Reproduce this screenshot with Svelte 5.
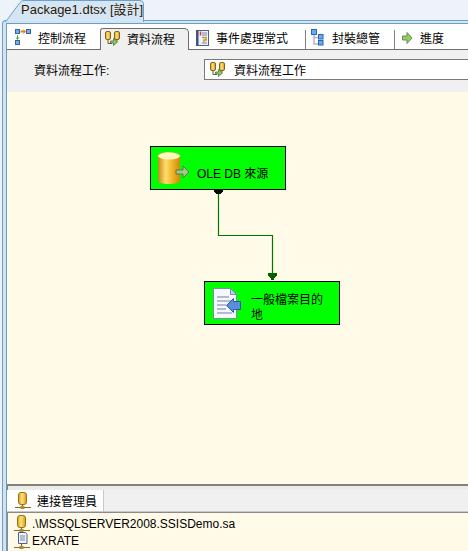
<script lang="ts">
	const tabs = [
		{ label: '控制流程', icon: 'control', active: false },
		{ label: '資料流程', icon: 'data', active: true },
		{ label: '事件處理常式', icon: 'event', active: false },
		{ label: '封裝總管', icon: 'tree', active: false },
		{ label: '進度', icon: 'progress', active: false }
	];
</script>

{#snippet dataIcon()}
	<svg width="17" height="17" viewBox="0 0 17 17">
		<defs>
			<linearGradient id="gold" x1="0" x2="1" y1="0" y2="0">
				<stop offset="0" stop-color="#d8a020" />
				<stop offset="0.450" stop-color="#ffe27a" />
				<stop offset="1" stop-color="#d49a18" />
			</linearGradient>
		</defs>
		<rect x="1.500" y="1.500" width="5" height="8" rx="1.500" fill="url(#gold)" stroke="#85660f" />
		<rect x="10.500" y="1.500" width="5" height="8" rx="1.500" fill="url(#gold)" stroke="#85660f" />
		<path d="M4 9.500v4h4M13 9.500v2" fill="none" stroke="#6a5a20" />
		<path d="M6.500 11h3V8.500l4 3.500-4 3.500V13h-3z" fill="#8cc56a" stroke="#4c7a3a" stroke-width="0.800" />
	</svg>
{/snippet}

{#snippet connIcon()}
	<svg width="20" height="18" viewBox="0 0 20 18">
		<rect x="4.500" y="0.500" width="8" height="12" rx="2.500" fill="url(#gold)" stroke="#9a7414" />
		<path d="M8.500 12v3M1 15.500h16" stroke="#8a6a20" stroke-width="1.200" fill="none" />
		<rect x="6.500" y="14" width="4" height="3" fill="#b08a30" />
	</svg>
{/snippet}

<div class="page">
	<div class="doc-strip">
		<svg class="doc-shape" width="148" height="22" viewBox="0 0 148 22">
			<path d="M5.500 22L20 2.500Q21.500 0.500 24 0.500H140Q143.500 0.500 143.500 4V22" fill="#d4e6f6" stroke="#6ea0c4" />
		</svg>
		<div class="doc-tab">Package1.dtsx [設計]</div>
	</div>
	<div class="frame">
		<div class="inner">
			<div class="tabs">
				{#each tabs as tab, i}
					{#if i > 2}<span class="sep"></span>{/if}
					<div class="tab {tab.icon}" class:active={tab.active}>
						{#if tab.icon === 'control'}
							<svg width="17" height="17" viewBox="0 0 17 17">
								<rect x="0.500" y="0.500" width="4" height="4" fill="#6ab0ea" stroke="#35639c" />
								<rect x="11.500" y="0.500" width="4" height="4" fill="#6ab0ea" stroke="#35639c" />
								<rect x="0.500" y="11.500" width="4" height="4" fill="#6ab0ea" stroke="#35639c" />
								<path d="M5.500 1.500h3V0l2.500 2.500L8.500 5V3.500h-3z" fill="#ea7c22" />
								<path d="M2 6v2.500H0.500l2 2.500 2-2.500H3V6z" fill="#55b044" />
							</svg>
						{:else if tab.icon === 'data'}
							{@render dataIcon()}
						{:else if tab.icon === 'event'}
							<svg width="17" height="16" viewBox="0 0 17 16">
								<rect x="2.500" y="0.500" width="12" height="15" fill="#eef0f8" stroke="#50608c" />
								<path d="M3.500 0v16" stroke="#3c4c80" stroke-width="2" />
								<path d="M8 3h5M8 5h5M8 13h5" stroke="#7684a8" />
								<path d="M6.500 1.500v4" stroke="#d33" stroke-width="1.500" />
								<path d="M8 7.500h4v2.500h-2v2" fill="none" stroke="#c89a20" stroke-width="1.500" />
							</svg>
						{:else if tab.icon === 'tree'}
							<svg width="17" height="17" viewBox="0 0 17 17">
								<path d="M3 5v10h6M3 8.500h6" fill="none" stroke="#b4b4cc" stroke-width="1.500" />
								<rect x="0.500" y="0.500" width="5" height="5" fill="#62aef0" stroke="#2d66ac" />
								<rect x="7.500" y="5.500" width="4.500" height="4.500" fill="#62aef0" stroke="#2d66ac" />
								<rect x="7.500" y="11.500" width="4.500" height="4.500" fill="#62aef0" stroke="#2d66ac" />
							</svg>
						{:else}
							<svg width="17" height="14" viewBox="0 0 17 14">
								<path d="M0.500 5h4.500V1.500l5 5.500-5 5.500V9H0.500z" fill="#96cd5e" stroke="#6a8a58" />
							</svg>
						{/if}
						<span>{tab.label}</span>
					</div>
				{/each}
			</div>

			<div class="task-bar">
				<span class="task-label">資料流程工作:</span>
				<div class="task-select">
					{@render dataIcon()}
					<span>資料流程工作</span>
				</div>
			</div>

			<div class="canvas">
				<svg class="wire" width="468" height="392" viewBox="0 0 468 392">
					<path d="M218.500 98v45.500h54V181" fill="none" stroke="#007800" stroke-width="1.200" />
					<path d="M268 181h9v3h-1v1h-1v1h-1v2h-3v-2h-1v-1h-1v-1h-1z" fill="#006400" />
					<path d="M214 98h9v2h-1v1h-1v1h-5v-1h-1v-1h-1z" fill="#000" />
				</svg>

				<div class="node source">
					<svg width="34" height="34" viewBox="0 0 34 34">
						<defs>
							<linearGradient id="barrel" x1="0" x2="1" y1="0" y2="0">
								<stop offset="0" stop-color="#c48a14" />
								<stop offset="0.350" stop-color="#ffdc70" />
								<stop offset="0.700" stop-color="#eeb020" />
								<stop offset="1" stop-color="#c88a10" />
							</linearGradient>
						</defs>
						<path d="M1 5c0-5 22-5 22 0v25c0 4-22 4-22 0z" fill="url(#barrel)" />
						<ellipse cx="12" cy="5" rx="11" ry="3.500" fill="#fff6c0" />
						<path d="M19 19h7v-4l6 6-6 6v-4h-7z" fill="#a2ca86" stroke="#527a4c" />
					</svg>
					<span>OLE DB 來源</span>
				</div>

				<div class="node dest">
					<svg width="34" height="34" viewBox="0 0 34 34">
						<path d="M1.500 2.500h17l6 6v24h-23z" fill="#f6f8fe" stroke="#7c8cb0" />
						<path d="M18.500 2.500v6h6z" fill="#c4cce0" stroke="#7c8cb0" />
						<path d="M5 11h12M5 15h15M5 19h9M5 23h9M5 27h15" stroke="#9aa8c4" stroke-width="1.500" />
						<path d="M28.500 15.500v8h-7v3l-7-7 7-7v3z" fill="#5c8cdc" stroke="#2c58a8" />
					</svg>
					<span>一般檔案目的地</span>
				</div>
			</div>

			<div class="splitter"></div>

			<div class="conn-tabs">
				<div class="conn-tab">
					{@render connIcon()}
					<span>連接管理員</span>
				</div>
			</div>

			<div class="conn-list">
				<div class="conn-row">
					{@render connIcon()}
					<span>.\MSSQLSERVER2008.SSISDemo.sa</span>
				</div>
				<div class="conn-row">
					<svg width="20" height="18" viewBox="0 0 20 18">
						<path d="M5.500 0.500h7l1.500 2v9h-8.500z" fill="#eef2fc" stroke="#50608c" />
						<path d="M7 4h5M7 6h5M7 8h5" stroke="#7a88a8" />
						<path d="M8.500 12v3M1 15.500h16" stroke="#8a6a20" stroke-width="1.200" fill="none" />
						<rect x="6.500" y="14" width="4" height="3" fill="#b08a30" />
					</svg>
					<span>EXRATE</span>
				</div>
			</div>
		</div>
	</div>
</div>

<style>
	:global(body) {
		margin: 0;
		background: #eef2fb;
	}

	.page {
		width: 468px;
		height: 551px;
		overflow: hidden;
		font-family: 'Liberation Sans', 'Noto Sans CJK TC', sans-serif;
		font-size: 12px;
		color: #000;
		display: flex;
		flex-direction: column;
	}

	.doc-strip {
		position: relative;
		z-index: 1;
		height: 20px;
		flex: none;
		background: #eef2fb;
	}

	.doc-shape {
		position: absolute;
		left: 0;
		top: 0;
	}

	.doc-tab {
		position: relative;
		line-height: 20px;
		padding-left: 21px;
		font-size: 13px;
		color: #301800;
		white-space: nowrap;
	}

	.frame {
		flex: 1;
		min-height: 0;
		margin-left: 2px;
		padding: 2px 0 0 3px;
		display: flex;
		border-top: 1px solid #6ea0c4;
		border-left: 1px solid #6ea0c4;
		border-top-left-radius: 4px;
		background: #cfe3f5;
	}

	.inner {
		flex: 1;
		min-width: 0;
		display: flex;
		flex-direction: column;
		border-top: 1px solid #6da0b8;
		border-left: 1px solid #6da0b8;
		background: #f0f0f0;
	}

	.tabs {
		height: 26px;
		flex: none;
		box-sizing: border-box;
		background: #fff;
		display: flex;
		align-items: flex-end;
		border-bottom: 1px solid #6d6d6d;
		white-space: nowrap;
	}

	.tab {
		height: 21px;
		display: flex;
		align-items: center;
		box-sizing: border-box;
		padding-bottom: 2px;
		flex: none;
	}

	.tab.control {
		width: 93px;
		gap: 6px;
		padding-left: 8px;
	}

	.tab.data {
		width: 89px;
		height: 22px;
		margin-bottom: -1px;
		gap: 6px;
		padding-left: 3px;
		background: #f0f0f0;
		border: 1px solid #6d6d6d;
		border-bottom: 0;
		border-radius: 3px 5px 0 0;
	}

	.tab.event {
		width: 116px;
		gap: 5px;
		padding-left: 5px;
	}

	.tab.tree {
		width: 88px;
		gap: 4px;
		padding-left: 5px;
	}

	.tab.progress {
		gap: 1px;
		padding-left: 7px;
	}

	.sep {
		width: 1px;
		height: 19px;
		background: #808080;
		flex: none;
	}

	.task-bar {
		height: 42px;
		flex: none;
		box-sizing: border-box;
		display: flex;
		align-items: flex-start;
		padding-top: 9px;
	}

	.task-label {
		width: 197px;
		padding-left: 27px;
		box-sizing: border-box;
		line-height: 24px;
		flex: none;
	}

	.task-select {
		flex: 1;
		height: 19px;
		background: #fff;
		border: solid #7a7a7a;
		border-width: 1px 0 1px 1px;
		display: flex;
		align-items: center;
		gap: 8px;
		padding-left: 4px;
	}

	.canvas {
		position: relative;
		height: 392px;
		flex: none;
		background: #fffbe8;
	}

	.wire {
		position: absolute;
		left: -7px;
		top: 0;
	}

	.node {
		position: absolute;
		box-sizing: border-box;
		height: 44px;
		width: 136px;
		background: #00ff00;
		border: 1px solid #000;
		display: flex;
		align-items: center;
	}

	.node svg {
		flex: none;
	}

	.source {
		left: 143px;
		top: 54px;
		padding-left: 6px;
		gap: 6px;
	}

	.source span {
		margin-top: 8px;
	}

	.dest {
		left: 197px;
		top: 189px;
		padding-left: 7px;
		gap: 5px;
	}

	.dest span {
		width: 76px;
		line-height: 15px;
		margin-top: 10px;
	}

	.splitter {
		height: 6px;
		flex: none;
		box-sizing: border-box;
		background: #ecebe4;
		border-top: 2px solid #808080;
		border-left: 1px solid #808080;
	}

	.conn-tabs {
		height: 22px;
		flex: none;
		box-sizing: border-box;
		background: #f0f0f0;
		border-bottom: 1px solid #c8c8c8;
	}

	.conn-tab {
		width: 97px;
		height: 21px;
		box-sizing: border-box;
		background: #fff;
		border-right: 1px solid #c8c8c8;
		display: flex;
		align-items: center;
		gap: 3px;
		padding-left: 7px;
	}

	.conn-list {
		flex: 1;
		background: #fffbe8;
		border-top: 1px solid #8a8a8a;
		border-left: 1px solid #8a8a8a;
		padding: 2px 0 0 5px;
		min-height: 0;
	}

	.conn-row {
		height: 17px;
		display: flex;
		align-items: center;
	}

	.conn-row svg {
		flex: none;
		margin-right: -1px;
	}
</style>
